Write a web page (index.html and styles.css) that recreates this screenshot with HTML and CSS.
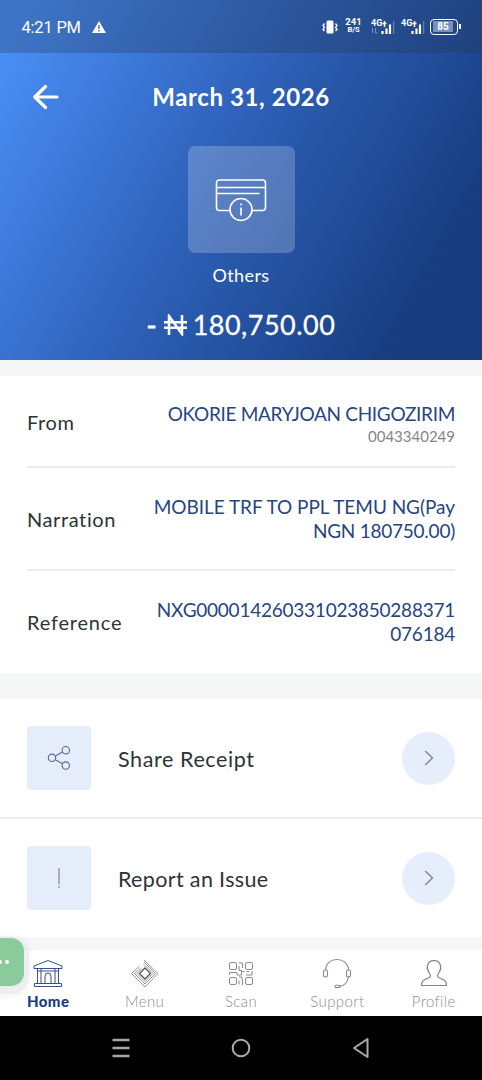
FILE: index.html
```html
<!DOCTYPE html>
<html lang="en">
<head>
<meta charset="utf-8">
<title>Transaction details</title>
<link rel="stylesheet" href="styles.css">
</head>
<body>
<main class="screen">
  <section class="hero">
    <div class="status">
      <span class="time">4:21 PM</span>
      <svg class="warn" width="14" height="12" viewBox="0 0 14 12"><path d="M7 0L14 12H0Z" fill="#fff"/><path d="M7 4v4M7 9v1.500" stroke="#3563b0" stroke-width="1.300"/></svg>
      <div class="indicators">
        <svg width="18" height="14" viewBox="0 0 18 14"><rect x="5.500" y="0.500" width="7" height="13" rx="1.500" fill="#fff"/><path d="M3.500 3.500L2 5.500l1.500 2L2 9.500 3.500 11M14.500 3.500l1.500 2-1.500 2 1.500 2-1.500 1.500" fill="none" stroke="#fff" stroke-width="1.300"/></svg>
        <div class="speed"><b>241</b><small>B/S</small></div>
        <div class="signal"><b>4G</b><svg width="24" height="15" viewBox="0 0 24 15"><path d="M13.500 1v6M11.500 3.500h4" stroke="#fff" stroke-width="1.500" fill="none"/><path d="M11.500 11v3M15.500 8.500V14M19 4.500V14" stroke="#fff" stroke-width="2.200"/><path d="M22.700 1v13M1.500 8v5M4.500 8v5h2" stroke="#6e91cc" fill="none"/></svg></div>
        <div class="signal second"><b>4G</b><svg width="24" height="15" viewBox="0 0 24 15"><path d="M13.500 1v6M11.500 3.500h4" stroke="#fff" stroke-width="1.500" fill="none"/><path d="M11.500 11v3M15.500 8.500V14M19 4.500V14" stroke="#fff" stroke-width="2.200"/><path d="M22.700 1v13" stroke="#6e91cc"/></svg></div>
        <div class="battery"><span>85</span></div>
      </div>
    </div>
    <header class="bar">
      <svg class="back" width="26" height="26" viewBox="0 0 26 26"><path d="M24 13H2M12.500 2.500L1.800 13l10.700 10.500" fill="none" stroke="#fff" stroke-width="3.200" stroke-linecap="round" stroke-linejoin="round"/></svg>
      <h1 class="date">March 31, 2026</h1>
    </header>
    <div class="category">
      <svg width="52" height="44" viewBox="0 0 52 44" fill="none" stroke="#fff" stroke-width="1.600"><path d="M14.500 32.500H4.500a3 3 0 0 1-3-3V5a3 3 0 0 1 3-3h43a3 3 0 0 1 3 3v24.500a3 3 0 0 1-3 3H37M1.500 9.500h49M1.500 15.500h43"/><circle cx="26" cy="31.500" r="11"/><path d="M26 29.500v8M26 25.500v1.800"/></svg>
    </div>
    <div class="catname">Others</div>
    <div class="amount"><span class="minus">-</span><svg width="23" height="22" viewBox="0 0 23 22"><path d="M5 21V2L18 20V1M0 8.200h23M0 13.800h23" fill="none" stroke="#fff" stroke-width="2.500"/></svg><span class="sum">180,750.00</span></div>
  </section>

  <section class="details">
    <div class="row from"><span class="label l-from">From</span><div class="value"><div class="v-name">OKORIE MARYJOAN CHIGOZIRIM</div><div class="account">0043340249</div></div></div>
    <div class="row"><span class="label l-narr">Narration</span><div class="value"><div class="v-narr">MOBILE TRF TO PPL TEMU NG(Pay</div><div class="v-ngn">NGN 180750.00)</div></div></div>
    <div class="row"><span class="label l-ref">Reference</span><div class="value"><div class="v-ref">NXG000014260331023850288371</div><div class="v-ref">076184</div></div></div>
  </section>

  <section class="actions">
    <div class="action">
      <div class="tile"><svg width="24" height="24" viewBox="0 0 24 24" fill="none" stroke="#566b9f" stroke-width="1.150"><circle cx="5" cy="11.800" r="3.700"/><circle cx="18.800" cy="4.200" r="3.700"/><circle cx="18.800" cy="19.500" r="3.700"/><path d="M8.200 10l7.400-4M8.200 13.700l7.400 4"/></svg></div>
      <span class="action-name a-share">Share Receipt</span>
      <div class="go"><svg width="10" height="16" viewBox="0 0 10 16"><path d="M1.200 1l7.300 7-7.300 7" fill="none" stroke="#76829a" stroke-width="1.300"/></svg></div>
    </div>
    <div class="action">
      <div class="tile"><svg width="4" height="20" viewBox="0 0 4 20"><path d="M2 0v16.500M2 18v2" stroke="#8f99b3" stroke-width="1.500"/></svg></div>
      <span class="action-name a-report">Report an Issue</span>
      <div class="go"><svg width="10" height="16" viewBox="0 0 10 16"><path d="M1.200 1l7.300 7-7.300 7" fill="none" stroke="#76829a" stroke-width="1.300"/></svg></div>
    </div>
  </section>

  <nav class="tabs">
    <div class="tab on"><svg width="30" height="30" viewBox="0 0 30 30" fill="none" stroke="#365487" stroke-width="1"><path d="M1 8L15 2.500 29 8v2.500H1ZM1.500 25.500h27v3h-27ZM4.500 10.500v15M8 10.500v15M22 10.500v15M25.500 10.500v15M12 25.500v-7.500a3 3 0 0 1 6 0v7.500M4 13h22"/></svg><span class="t-home">Home</span></div>
    <div class="tab"><svg width="30" height="30" viewBox="0 0 30 30" fill="none" stroke="#8a8a8a" stroke-width=".9"><path d="M15 10l5.500 5.500L15 21l-5.500-5.500Z" stroke="#555" stroke-width="1.300"/><path d="M13.500 6l9.500 9.500-8 8-8-8 4.500-4.500M14 2l14 13.500L15 29 1.500 15.500 9 8.500M14 4l11.500 11.500L15 26 4.500 15.500l6-5.500"/></svg><span class="t-menu">Menu</span></div>
    <div class="tab"><svg width="30" height="30" viewBox="0 0 30 30" fill="none" stroke="#8c8c8c" stroke-width="1"><rect x="3.500" y="4.500" width="7" height="7" rx="1.500"/><rect x="19.500" y="4.500" width="7" height="7" rx="1.500"/><rect x="3.500" y="19.500" width="7" height="7" rx="1.500"/><rect x="19.500" y="19.500" width="7" height="7" rx="1.500"/><path d="M13 5h3.500v5M13 8v4.500h3M3.500 17v-2.500h7.500v2.500h4.500v-3.500h3M20.500 13.500h2.500M26 13v4h-6M13 19h3v3.500M13 26.500v-4M16.500 22v5"/></svg><span class="t-scan">Scan</span></div>
    <div class="tab"><svg width="30" height="30" viewBox="0 0 30 30" fill="none" stroke="#888" stroke-width="1.100"><path d="M3.500 12C4 5 9 1.500 15 1.500S26 5 26.500 12M26.500 18.500C25.500 25 22 28.200 17 28.400"/><rect x="1.500" y="12" width="4" height="7" rx="1.700"/><rect x="24.500" y="12" width="4" height="7" rx="1.700"/><rect x="13" y="27.200" width="5" height="2.300" rx="1.100"/></svg><span class="t-support">Support</span></div>
    <div class="tab"><svg width="30" height="30" viewBox="0 0 30 30" fill="none" stroke="#858585" stroke-width="1.200"><path d="M2.500 27.500c0-4.500 1.500-5.500 7-7.500 2.500-1 2.200-3 .8-5C8.500 12.500 8 10 8.500 7.500c.8-3 3.300-4.800 6.500-4.800s5.700 1.800 6.500 4.800c.5 2.500 0 5-1.800 7.500-1.400 2-1.700 4 .8 5 5.500 2 7 3 7 7.500Z"/></svg><span class="t-profile">Profile</span></div>
  </nav>

  <footer class="system">
    <svg width="20" height="22" viewBox="0 0 20 22"><path d="M1.500 3h17M1.500 11h17M1.500 19h17" stroke="#a5a5a5" stroke-width="2.300"/></svg>
    <svg width="20" height="20" viewBox="0 0 20 20"><circle cx="10" cy="10" r="8.300" fill="none" stroke="#aaa" stroke-width="2"/></svg>
    <svg width="18" height="22" viewBox="0 0 18 22"><path d="M15.500 2v18L2 11Z" fill="none" stroke="#aaa" stroke-width="2" stroke-linejoin="round"/></svg>
  </footer>
  <div class="bubble"><i></i><i></i></div>
</main>
</body>
</html>
```
FILE: styles.css
```css
* { box-sizing: border-box; }
body { margin: 0; font-family: Lato, sans-serif; color: #2d3436; }
svg { display: block; flex: none; }
.screen { position: relative; width: 482px; height: 1080px; overflow: hidden; display: flex; flex-direction: column; background: #f5f6f8; }

.hero { height: 360px; flex: none; display: flex; flex-direction: column; align-items: center; color: #fff; background: linear-gradient(119deg, #4b90f8 3%, #2e60b7 46%, #173d80 86%); }
.status { width: 100%; height: 53px; flex: none; display: flex; align-items: center; padding: 1px 21px 0; background: rgba(38, 55, 85, .3); font-family: Roboto, sans-serif; }
.time { font-size: 16.5px; letter-spacing: -.2px; margin-left: .5px; white-space: nowrap; }
.warn { margin-left: 11px; }
.indicators { margin-left: auto; display: flex; align-items: center; }
.speed { width: 17px; margin: -3px 9px 0 6px; display: flex; flex-direction: column; align-items: center; font-size: 10px; line-height: 9px; }
.speed b { font-size: 9.5px; }
.speed small { font-size: 7.5px; line-height: 8px; font-weight: 700; }
.signal { position: relative; width: 24px; margin-right: 6px; }
.signal.second { margin-right: 5px; }
.signal b { position: absolute; left: 0; top: -2px; font-size: 9px; line-height: 10px; }
.battery { position: relative; width: 28px; height: 16px; border: 1.5px solid #fff; border-radius: 4px; padding: 1px; margin-right: 3px; }
.battery span { display: block; height: 11px; width: 20px; margin-left: 1px; background: #7891c4; font-size: 10px; line-height: 11px; font-weight: 700; text-align: center; }
.battery::after { content: ""; position: absolute; right: -4px; top: 4px; width: 2px; height: 5px; background: #fff; }
.bar { width: 100%; height: 93px; display: grid; grid-template-columns: 82px 1fr 82px; padding-bottom: 6px; align-items: center; }
.back { margin-left: 33px; }
.date { margin: 0; text-align: center; font-size: 24px; font-weight: 700; line-height: 28px; white-space: nowrap; letter-spacing: .6px; padding-top: 1px; }
.category { width: 107px; height: 107px; flex: none; display: grid; place-items: center; border-radius: 7px; background: rgba(255, 255, 255, .21); }
.catname { margin-top: 11px; font-size: 18px; line-height: 22px; letter-spacing: .4px; }
.amount { margin-top: 22px; height: 34px; display: flex; align-items: center; font-size: 27px; line-height: 34px; font-weight: 400; -webkit-text-stroke: .3px #fff; }
.minus { -webkit-text-stroke: .8px #fff; }
.sum { letter-spacing: .5px; }
.amount svg { margin: 0 6px 1px 7px; }

.details { margin-top: 16px; height: 297px; flex: none; background: #fff; padding: 0 27px; }
.row { height: 103px; display: flex; align-items: center; justify-content: space-between; border-bottom: 2px solid #ececed; }
.row.from { height: 92px; padding-top: 2px; }
.row:last-child { border: 0; height: 102px; }
.label { font-size: 20px; line-height: 24px; white-space: nowrap; }
.l-from { letter-spacing: .6px; }
.l-narr { letter-spacing: .6px; }
.l-ref { letter-spacing: .8px; }
.value { display: flex; flex-direction: column; align-items: flex-end; color: #27457f; font-size: 19px; line-height: 24px; white-space: nowrap; }
.from .value { padding-top: 4px; }
.v-name { letter-spacing: -.32px; }
.v-narr { letter-spacing: -.04px; }
.v-ngn, .v-ref { letter-spacing: -.24px; }
.account { color: #858585; font-size: 15px; line-height: 20px; }

.actions { margin-top: 26px; height: 238px; flex: none; background: #fff; }
.action { height: 120px; display: flex; align-items: center; padding: 0 27px; border-bottom: 2px solid #ececed; }
.action:last-child { border: 0; height: 118px; }
.tile { width: 64px; height: 64px; border-radius: 4px; display: grid; place-items: center; background: #e5edfb; }
.action-name { margin: 1px auto 0 27px; font-size: 21.5px; line-height: 26px; white-space: nowrap; }
.a-share { letter-spacing: .6px; }
.a-report { letter-spacing: .35px; }
.go { width: 53px; height: 53px; border-radius: 50%; display: grid; place-items: center; background: #e6eefc; }

.tabs { margin-top: 13px; height: 66px; flex: none; display: grid; grid-template-columns: repeat(5, 1fr); background: #fff; }
.tab { display: flex; flex-direction: column; align-items: center; padding-top: 8px; color: #8d8d8d; font-size: 15px; line-height: 20px; font-weight: 300; }
.tab span { margin-top: 3px; white-space: nowrap; letter-spacing: .4px; }
.tab.on { color: #1b3c80; font-weight: 900; }
.system { height: 64px; flex: none; background: #000; display: grid; grid-template-columns: repeat(3, 120px); justify-content: center; justify-items: center; align-items: center; }
.bubble { position: absolute; left: -24px; top: 938px; width: 48px; height: 48px; border-radius: 13px; background: #8bcb9b; box-shadow: 0 3px 0 5px rgba(235, 235, 235, .65), 0 5px 8px 5px rgba(0, 0, 0, .06); display: flex; justify-content: flex-end; align-items: center; gap: 3px; padding-right: 15px; }
.bubble i { width: 4px; height: 4px; border-radius: 50%; background: #fff; }
```
